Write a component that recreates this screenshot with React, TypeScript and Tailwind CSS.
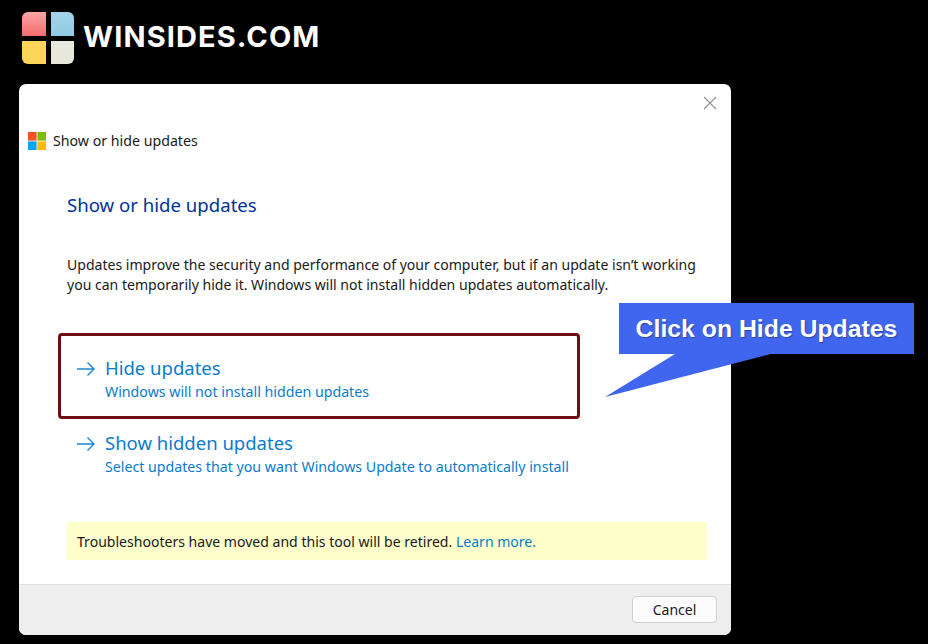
import React from 'react';

const uiFont = "font-['Noto_Sans',sans-serif]";

const Arrow: React.FC = () => (
  <svg width="20" height="16" viewBox="0 0 20 16" fill="none" stroke="#1a86d0" strokeWidth="1.4" className="shrink-0">
    <path d="M1 8h17M11.5 1.5L18 8l-6.5 6.5" />
  </svg>
);

const WinsidesLogo: React.FC = () => (
  <svg width="52" height="52" viewBox="0 0 52 52">
    <defs>
      <linearGradient id="red" x1="0" y1="0" x2="0" y2="1">
        <stop offset="0" stopColor="#fba5a5" />
        <stop offset="1" stopColor="#f26c6c" />
      </linearGradient>
      <linearGradient id="blue" x1="0" y1="0" x2="0" y2="1">
        <stop offset="0" stopColor="#a4d4ea" />
        <stop offset="1" stopColor="#8fcbe4" />
      </linearGradient>
    </defs>
    <path d="M6 0h18v24H0V6a6 6 0 0 1 6-6z" fill="url(#red)" />
    <path d="M29 0h17a6 6 0 0 1 6 6v18H29z" fill="url(#blue)" />
    <path d="M0 29h24v23H6a6 6 0 0 1-6-6z" fill="#fdd558" />
    <path d="M29 29h23v17a6 6 0 0 1-6 6H29z" fill="#e8e8dc" />
  </svg>
);

const WindowsIcon: React.FC = () => (
  <svg width="18" height="18" viewBox="0 0 18 18" className="shrink-0">
    <rect x="0" y="0" width="8.6" height="8.6" fill="#f25325" />
    <rect x="9.4" y="0" width="8.6" height="8.6" fill="#80bb06" />
    <rect x="0" y="9.4" width="8.6" height="8.6" fill="#05a5f0" />
    <rect x="9.4" y="9.4" width="8.6" height="8.6" fill="#ffba08" />
  </svg>
);

const OptionLink: React.FC<{ title: string; text: string }> = ({ title, text }) => (
  <div className="flex items-start gap-[9px] text-[#0a7ccb]">
    <div className="pt-[6px]">
      <Arrow />
    </div>
    <div>
      <div className="text-[18.5px] leading-[26px]">{title}</div>
      <div className="text-[14.2px] leading-[21px]">{text}</div>
    </div>
  </div>
);

export default function App() {
  return (
    <div className={`relative h-[644px] w-[928px] overflow-hidden bg-black ${uiFont}`}>
      <div className="flex h-[64px] items-end pl-[22px]">
        <WinsidesLogo />
        <div className="mb-[11px] ml-[9px] font-['Inter',sans-serif] text-[29px] leading-[32px] font-bold tracking-[1.1px] text-white">
          WINSIDES.COM
        </div>
      </div>

      <div className="mt-[20px] ml-[19px] flex h-[551px] w-[712px] flex-col overflow-hidden rounded-[7px] bg-white text-[#1a1a1a]">
        <div className="flex h-[47px] justify-end pt-[12px] pr-[14px]">
          <svg width="14" height="14" viewBox="0 0 14 14" stroke="#8f8f8f" strokeWidth="1.1">
            <path d="M1 1l12 12M13 1L1 13" />
          </svg>
        </div>

        <div className="flex h-[20px] items-center gap-[7px] pl-[9px] text-[14.2px]">
          <WindowsIcon />
          <span>Show or hide updates</span>
        </div>

        <div className="flex-1 pr-[17px] pl-[48px]">
          <div className="mt-[40px] text-[18.6px] leading-[28px] text-[#003399]">Show or hide updates</div>
          <div className="mt-[36px] text-[14.05px] leading-[20px] whitespace-nowrap">
            <div>Updates improve the security and performance of your computer, but if an update isn’t working</div>
            <div>you can temporarily hide it. Windows will not install hidden updates automatically.</div>
          </div>

          <div className="mt-[38px] -ml-[9px] h-[86px] w-[522px] rounded-[4px] border-[3px] border-[#6f0f14] pt-[19px] pl-[15px]">
            <OptionLink title="Hide updates" text="Windows will not install hidden updates" />
          </div>
          <div className="mt-[11px] pl-[9px]">
            <OptionLink
              title="Show hidden updates"
              text="Select updates that you want Windows Update to automatically install"
            />
          </div>

          <div className="mt-[45px] flex h-[38px] w-[640px] items-center bg-[#ffffcc] pt-px pl-[10px] text-[14.05px]">
            <span>
              Troubleshooters have moved and this tool will be retired.{' '}
              <span className="text-[#0a7ccb]">Learn more.</span>
            </span>
          </div>
        </div>

        <div className="flex h-[51px] items-start justify-end border-t border-[#dfdfdf] bg-[#eeeeee] pt-[11px] pr-[14px]">
          <div className="flex h-[27px] w-[85px] items-center justify-center rounded-[4px] border border-[#d0d0d0] bg-[#fbfbfb] text-[14px]">
            Cancel
          </div>
        </div>
      </div>

      {/* callout over the dialog */}
      <div className="absolute top-[303px] left-[619px] flex h-[51px] w-[295px] items-center justify-center bg-[#4065ee] font-['Liberation_Sans',sans-serif] text-[24.8px] font-bold text-white [text-shadow:1px_1px_1px_rgba(0,0,0,0.3)]">
        Click on Hide Updates
      </div>
      <svg className="absolute top-[354px] left-[605px]" width="170" height="44" viewBox="0 0 170 44">
        <path d="M0 43L70 0h96z" fill="#4065ee" />
      </svg>
    </div>
  );
}
